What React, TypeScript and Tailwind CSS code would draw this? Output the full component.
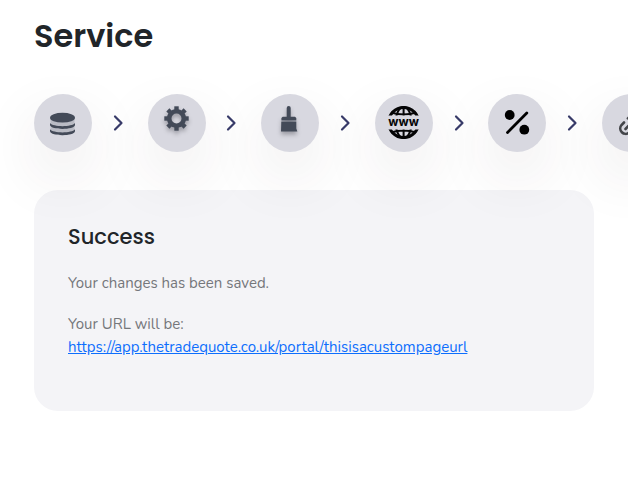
import type { ReactNode } from "react";

const gearTeeth = [0, 45, 90, 135, 180, 225, 270, 315];

function DatabaseIcon() {
  return (
    <g fill="#434a58">
      <path fill="#b9bbc4" d="M16.500 24v12c0 7 24 7 24 0V24z" />
      <ellipse cx="28.500" cy="23.700" rx="12.500" ry="4.900" />
      <path d="M16 29c3 4.200 22 4.200 25 0v2c-1 5.200-24 5.200-25 0z" />
      <path d="M16 35.300c3 4.200 22 4.200 25 0v2c-1 5.200-24 5.200-25 0z" />
    </g>
  );
}

function GearIcon() {
  return (
    <g className="drop-shadow-[0_3px_2px_rgba(40,40,50,0.35)]" fill="none" stroke="#434a58">
      <circle cx="28.500" cy="24.500" r="7.300" strokeWidth="4.600" />
      {gearTeeth.map((angle) => (
        <path key={angle} d="M28.500 17v-4.700" strokeWidth="4.400" transform={`rotate(${angle} 28.5 24.5)`} />
      ))}
    </g>
  );
}

function BrushIcon() {
  return (
    <g className="drop-shadow-[0_3px_2px_rgba(40,40,50,0.35)]" fill="#434a58">
      <path d="M25.700 14a2 2 0 0 1 4 0v8.700h4.300l1.300 1.300v2.600H20.400V24l1.300-1.300h4z" />
      <path d="M20.300 27.600h15v7l1 2.800H20z" />
    </g>
  );
}

function GlobeIcon() {
  return (
    <g>
      <clipPath id="globe-caps">
        <path d="M10 10h38v11.500H10zM10 35.500h38v12H10z" />
      </clipPath>
      <g clipPath="url(#globe-caps)" fill="none" stroke="#050506" strokeWidth="2">
        <circle cx="28.600" cy="28.500" r="15" strokeWidth="3" />
        <ellipse cx="28.600" cy="28.500" rx="8" ry="15.500" />
        <path d="M28.600 12v33M16 18.500q12.600 4 25.200 0M16 38.500q12.600-4 25.200 0" />
      </g>
      <text x="28.600" y="32" textAnchor="middle" fill="#050506" className="font-['Inter',sans-serif] text-[12px] font-bold">
        www
      </text>
    </g>
  );
}

function PercentIcon() {
  return (
    <g>
      <circle cx="21.700" cy="21" r="4.900" />
      <circle cx="36.300" cy="35.700" r="4.900" />
      <path d="M19.500 38.500 38.800 19" stroke="#000" strokeWidth="2.800" strokeLinecap="round" />
    </g>
  );
}

function LinkIcon() {
  return (
    <g fill="none" stroke="#434549" strokeWidth="2.600" strokeLinecap="round">
      <path d="m22 28.500-2.500 2.500a5.400 5.400 0 0 0 7.600 7.600l5-5" />
      <path d="m36 29.500 2.500-2.500a5.400 5.400 0 0 0-7.600-7.600l-5 5" />
      <path d="m23.500 35 10.500-11" />
    </g>
  );
}

const steps: { label: string; icon: ReactNode }[] = [
  { label: "Data", icon: <DatabaseIcon /> },
  { label: "Settings", icon: <GearIcon /> },
  { label: "Appearance", icon: <BrushIcon /> },
  { label: "Web address", icon: <GlobeIcon /> },
  { label: "Rates", icon: <PercentIcon /> },
  { label: "Link", icon: <LinkIcon /> },
];

function Chevron() {
  return (
    <svg aria-hidden="true" viewBox="0 0 14 18" className="h-[18px] w-[14px] shrink-0" fill="none" stroke="#383b69" strokeWidth="2.200" strokeLinecap="round" strokeLinejoin="round">
      <path d="m2 2.500 6.500 6.500-6.500 6.500" />
    </svg>
  );
}

export default function App() {
  return (
    <main className="overflow-hidden bg-white px-[34px] pt-3 pb-16 font-['Nunito','Lato',sans-serif]">
      <h1 className="font-['Poppins','Inter',sans-serif] text-[32px] leading-[48px] font-semibold text-[#212529]">Service</h1>

      <nav aria-label="Service steps" className="relative z-10 mt-[34px] flex min-w-[626px] items-center justify-between">
        {steps.flatMap((step, index) => [
          index > 0 ? <Chevron key={`${step.label}-divider`} /> : null,
          <button
            key={step.label}
            type="button"
            aria-label={step.label}
            className="size-[58px] shrink-0 rounded-full bg-[#d8d8e0] shadow-[0_24px_60px_rgba(60,40,50,0.10)]"
          >
            <svg aria-hidden="true" viewBox="0 0 58 58" className="size-full">
              {step.icon}
            </svg>
          </button>,
        ])}
      </nav>

      <section className="mt-[38px] rounded-3xl bg-[#f4f4f7] px-[34px] pt-[34px] pb-[52px]">
        <h2 className="font-['Poppins','Inter',sans-serif] text-[21px] leading-[26px] font-medium text-[#212529]">Success</h2>
        <p className="mt-[22px] text-[15px] leading-[23px] text-[#75777b]">Your changes has been saved.</p>
        <p className="mt-[18px] text-[15px] leading-[23px] text-[#75777b]">
          Your URL will be:
          <br />
          <a className="text-[#0d6efd] underline" href="https://app.thetradequote.co.uk/portal/thisisacustompageurl">
            https://app.thetradequote.co.uk/portal/thisisacustompageurl
          </a>
        </p>
      </section>
    </main>
  );
}
